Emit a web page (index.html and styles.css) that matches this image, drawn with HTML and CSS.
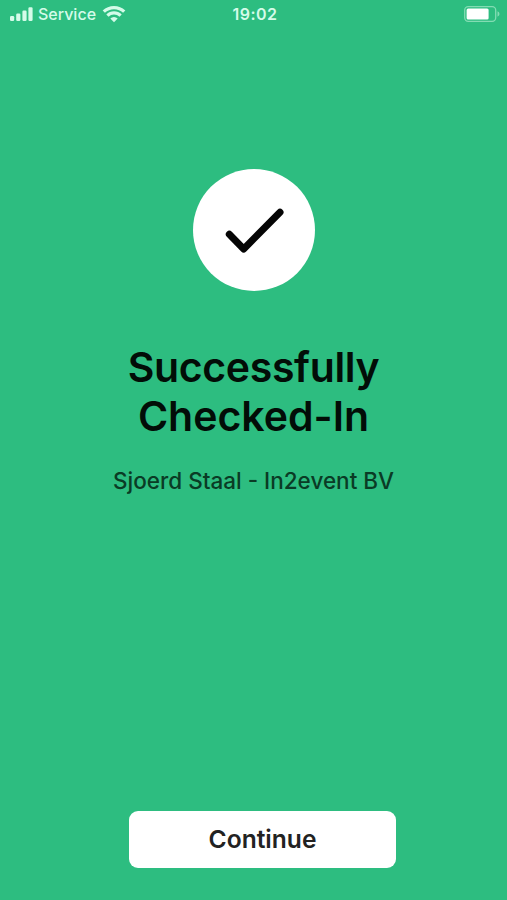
FILE: index.html
```html
<!DOCTYPE html>
<html lang="en">
<head>
    <meta charset="UTF-8">
    <meta name="viewport" content="width=device-width, initial-scale=1.0">
    <title>Check-In</title>
    <link rel="stylesheet" href="styles.css">
</head>
<body>
    <header class="status-bar">
        <div class="status-left">
            <svg class="signal" width="24" height="14" viewBox="0 0 24 14">
                <rect x="0" y="9" width="4.2" height="5" rx="1.2"/>
                <rect x="6.2" y="6.5" width="4.2" height="7.5" rx="1.2"/>
                <rect x="12.4" y="3.5" width="4.2" height="10.5" rx="1.2"/>
                <rect x="18.4" y="0.3" width="4.2" height="13.7" rx="1.2"/>
            </svg>
            <span class="carrier">Service</span>
            <svg class="wifi" width="24" height="18" viewBox="0 0 24 18">
                <path d="M1.8 6.7a14.6 14.6 0 0 1 20.4 0M5.4 10.6a9.5 9.5 0 0 1 13.2 0"/>
                <path class="wifi-dot" d="M12 17.3L8.3 13.6a5.3 5.3 0 0 1 7.4 0z"/>
            </svg>
        </div>
        <span class="time">19:02</span>
        <svg class="battery" width="36" height="16" viewBox="0 0 36 16">
            <rect class="battery-case" x="0.7" y="0.7" width="31" height="14.6" rx="3.5"/>
            <rect class="battery-level" x="2.6" y="2.5" width="22" height="11" rx="1.5"/>
            <path class="battery-tip" d="M33.5 5.3q2 .8 2 2.7t-2 2.7z"/>
        </svg>
    </header>

    <main class="content">
        <div class="circle">
            <svg width="60" height="48" viewBox="0 0 60 48">
                <path d="M5.3 28.2L19.7 43L56 6.3"/>
            </svg>
        </div>
        <h1><span class="tight">Successfully</span><br>Checked-In</h1>
        <p class="guest">Sjoerd Staal - In2event BV</p>
    </main>

    <button class="continue">Continue</button>
</body>
</html>
```

FILE: styles.css
```css
body {
    margin: 0;
    height: 900px;
    background: #2dbd80;
    font-family: Inter, Roboto, sans-serif;
    display: flex;
    flex-direction: column;
    overflow: hidden;
}
.status-bar {
    display: grid;
    grid-template-columns: 1fr auto 1fr;
    align-items: center;
    height: 28px;
    padding: 0 7px 1px 10px;
    color: #d5fbe9;
    fill: #d5fbe9;
    font-size: 16px;
    font-weight: 500;
}
.status-left {
    display: flex;
    align-items: center;
}
.carrier {
    margin: 0 6px 0 4px;
}
.wifi {
    fill: none;
    stroke: #d5fbe9;
    stroke-width: 3.2;
}
.wifi-dot {
    fill: #d5fbe9;
    stroke: none;
}
.time {
    font-weight: 600;
    letter-spacing: 0.5px;
}
.battery {
    justify-self: end;
}
.battery-case {
    fill: none;
    stroke: #83dcb3;
    stroke-width: 1.3;
}
.battery-level {
    fill: #fff;
}
.battery-tip {
    fill: #83dcb3;
}
.content {
    flex: 1;
    display: flex;
    flex-direction: column;
    align-items: center;
    padding-top: 140px;
    text-align: center;
}
.circle {
    display: flex;
    align-items: center;
    justify-content: center;
    width: 122px;
    height: 122px;
    border-radius: 50%;
    background: #fff;
}
.circle path {
    fill: none;
    stroke: #050505;
    stroke-width: 7;
    stroke-linecap: round;
    stroke-linejoin: round;
}
h1 {
    margin: 52px 0 0;
    font-size: 41px;
    line-height: 49px;
    font-weight: 600;
    color: #020d07;
}
.tight {
    letter-spacing: -0.35px;
}
.guest {
    margin: 26px 0 0;
    font-size: 22.5px;
    line-height: 28px;
    font-weight: 450;
    color: #0a3b25;
}
.continue {
    align-self: center;
    width: 267px;
    height: 57px;
    margin: 0 0 32px 18px;
    padding: 0 0 2px;
    border: none;
    border-radius: 9px;
    background: #fff;
    color: #222;
    font-family: inherit;
    font-size: 24.6px;
    font-weight: 600;
    cursor: pointer;
}
```
